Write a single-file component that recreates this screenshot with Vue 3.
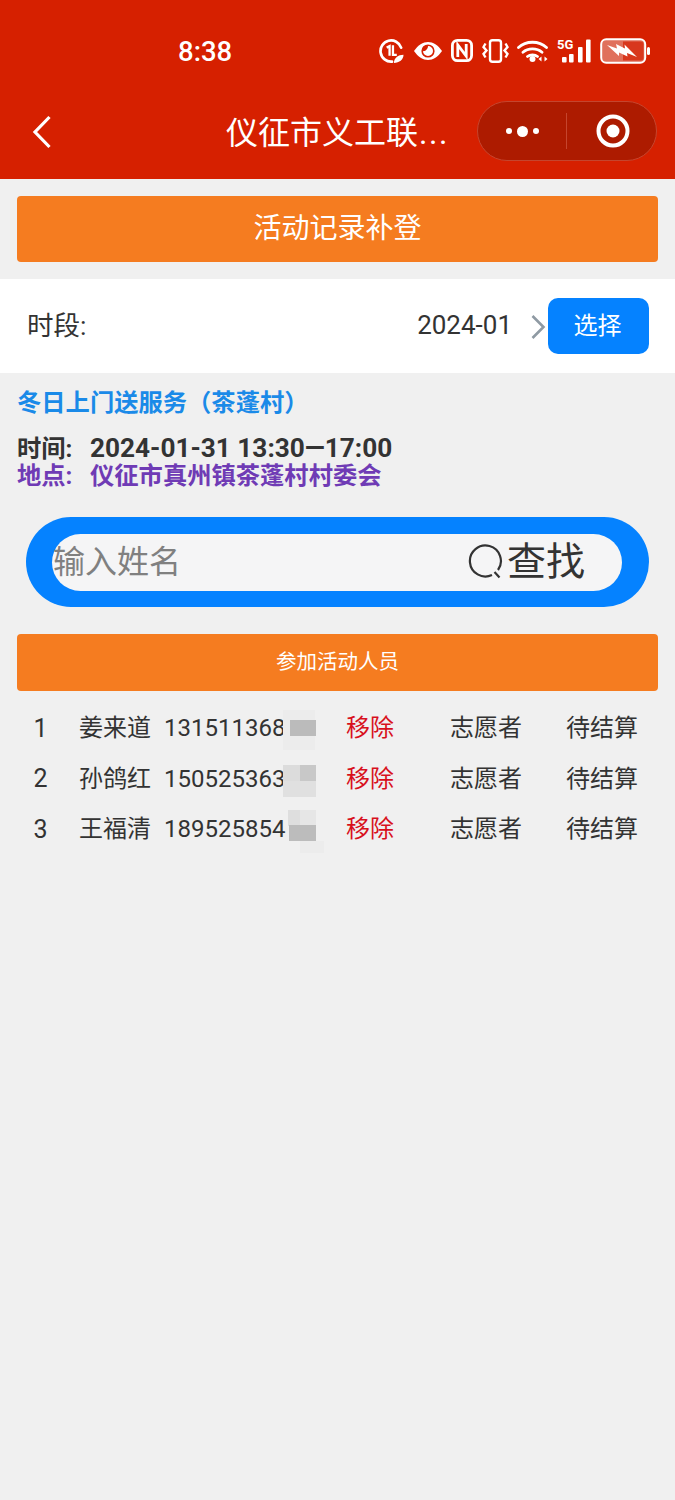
<template>
  <div class="page">
    <header class="topbar">
      <div class="statusbar">
        <span class="clock">8:38</span>
        <div class="status-icons">
          <svg class="ic" width="25" height="26" viewBox="0 0 26 26">
            <path d="M23 9.500A11 11 0 1 0 13.500 24" fill="none" stroke="#fff" stroke-width="2.800" stroke-linecap="round"/>
            <path d="M8 9.500l3-1.600V18M14.500 7V17h4" fill="none" stroke="#fff" stroke-width="2.400"/>
            <path d="M15.500 25.500c0-5 4.500-8.500 10-8.500 0 5-4.500 8.500-10 8.500z" fill="#fff"/>
          </svg>
          <svg class="ic" width="30" height="20" viewBox="0 0 30 20">
            <path d="M1 10C5 4 10 1 15 1s10 3 14 9c-4 6-9 9-14 9S5 16 1 10z" fill="#fff"/>
            <circle cx="15" cy="10" r="6.600" fill="#d62000"/>
            <path d="M15 5a5 5 0 1 1-5 5c2 .8 5-1.800 5-5z" fill="#fff"/>
          </svg>
          <svg class="ic" width="22" height="23" viewBox="0 0 22 23">
            <rect x="1.400" y="1.400" width="19.200" height="20.200" rx="5" fill="none" stroke="#fff" stroke-width="2.800"/>
            <path d="M6.800 18V6l8.400 11V5" fill="none" stroke="#fff" stroke-width="2.800"/>
          </svg>
          <svg class="ic" width="27" height="24" viewBox="0 0 27 24">
            <rect x="8" y="1.200" width="11" height="21.600" rx="2.500" fill="none" stroke="#fff" stroke-width="2.400"/>
            <path d="M3.500 4.500L1.500 8l3 3.500-3 3.500 2 3.500M23.500 4.500l2 3.500-3 3.500 3 3.500-2 3.500" fill="none" stroke="#fff" stroke-width="2.400"/>
          </svg>
          <svg class="ic" width="31" height="22" viewBox="0 0 31 22">
            <path d="M1.500 7.500C9 .5 22 .5 29.500 7.500M6 12.200c5-4.500 14-4.500 19 0M10.500 16.500c2.500-2 7.500-2 10 0" fill="none" stroke="#fff" stroke-width="2.800" stroke-linecap="round"/>
            <circle cx="15.500" cy="19" r="3" fill="#fff"/>
            <path d="M21.500 19l3-2.500v5zM30.500 19l-3-2.500v5z" fill="#fff"/>
          </svg>
          <svg class="ic" width="35" height="25" viewBox="0 0 35 25">
            <text x="0" y="11" class="five-g">5G</text>
            <rect x="5" y="19" width="4.600" height="5.500" rx="1" fill="#fff"/>
            <rect x="12" y="16" width="4.600" height="8.500" rx="1" fill="#fff"/>
            <rect x="21" y="9" width="4.600" height="15.500" rx="1" fill="#fff"/>
            <rect x="29" y="1.500" width="4.600" height="23" rx="1" fill="#fff"/>
          </svg>
          <svg class="ic" width="50" height="26" viewBox="0 0 50 26">
            <rect x="1.200" y="1.200" width="44" height="23.600" rx="5" fill="#e0705c" stroke="#fff" stroke-width="2"/>
            <path d="M23 3.500h17.500a3 3 0 0 1 3 3v13a3 3 0 0 1-3 3H23z" fill="#d8371d"/>
            <path d="M7 7l10 3.500L16 6l9 4.500-.5-4L37 19l-10-4 .5 3.500L19 14.500V18z" fill="#fff"/>
            <rect x="47" y="9" width="3" height="8" rx="1.500" fill="#fff"/>
          </svg>
        </div>
      </div>
      <nav class="navbar">
        <svg class="back" width="20" height="34" viewBox="0 0 20 34">
          <path d="M17.500 2L3 17l14.500 15" fill="none" stroke="#fff" stroke-width="3.200"/>
        </svg>
        <div class="title">仪征市义工联<span class="ellipsis">...</span></div>
        <div class="capsule">
          <div class="dots"><i class="dot"></i><i class="dot big"></i><i class="dot"></i></div>
          <div class="divider"></div>
          <svg width="36" height="36" viewBox="0 0 36 36">
            <circle cx="18" cy="18" r="14.500" fill="none" stroke="#fff" stroke-width="4"/>
            <circle cx="18" cy="18" r="6.500" fill="#fff"/>
          </svg>
        </div>
      </nav>
    </header>

    <div class="bar bar-top">活动记录补登</div>

    <div class="period">
      <span class="period-label">时段:</span>
      <span class="period-value">2024-01</span>
      <svg class="chevron" width="16" height="26" viewBox="0 0 16 26">
        <path d="M2.500 2l11 11-11 11" fill="none" stroke="#8f9aa3" stroke-width="2.600"/>
      </svg>
      <button class="pick">选择</button>
    </div>

    <div class="info">
      <div class="info-title">冬日上门送服务（茶蓬村）</div>
      <div class="info-time"><span class="info-key">时间:</span><span class="info-num">2024-01-31 13:30—17:00</span></div>
      <div class="info-place"><span class="info-key">地点:</span>仪征市真州镇茶蓬村村委会</div>
    </div>

    <div class="search">
      <div class="search-inner">
        <span class="placeholder">输入姓名</span>
        <svg class="search-icon" width="36" height="36" viewBox="0 0 36 36">
          <path d="M24 31A15.500 15.500 0 1 1 30 26" fill="none" stroke="#333" stroke-width="2.200"/>
          <path d="M26.500 28l5 5.500" stroke="#333" stroke-width="2.200" fill="none"/>
        </svg>
        <span class="search-text">查找</span>
      </div>
    </div>

    <div class="bar bar-people">参加活动人员</div>

    <div class="people">
      <div v-for="p in people" :key="p.no" class="person">
        <span class="no">{{ p.no }}</span>
        <span class="cn">{{ p.name }}</span>
        <span class="phone">{{ p.phone }}</span>
        <span class="cn remove">移除</span>
        <span class="cn">志愿者</span>
        <span class="cn">待结算</span>
      </div>
      <div class="mosaic">
        <i class="m m-fade1"></i>
        <i class="m m-dark1"></i>
        <i class="m m-a"></i>
        <i class="m m-b"></i>
        <i class="m m-c"></i>
        <i class="m m-d"></i>
        <i class="m m-e"></i>
        <i class="m m-dark2"></i>
        <i class="m m-fade2"></i>
      </div>
    </div>
  </div>
</template>

<script setup>
const people = [
  { no: 1, name: '姜来道', phone: '131511368' },
  { no: 2, name: '孙鸽红', phone: '150525363' },
  { no: 3, name: '王福清', phone: '189525854' }
]
</script>

<style>
body {
  background: #f0f0f0;
}
</style>

<style scoped>
.page {
  width: 675px;
  min-height: 1500px;
  background: #f0f0f0;
  font-family: Roboto, "Noto Sans CJK SC", sans-serif;
  color: #333;
  overflow: hidden;
}

.topbar {
  height: 179px;
  background: #d62000;
  color: #fff;
}

.statusbar {
  height: 101px;
  display: flex;
  align-items: center;
  padding: 0 25px 0 178px;
  box-sizing: border-box;
}

.clock {
  font-size: 27.500px;
  font-weight: 500;
  line-height: 1;
  padding-top: 2px;
}

.status-icons {
  margin-left: auto;
  display: flex;
  align-items: center;
  gap: 8.500px;
}

.ic {
  display: block;
  flex: none;
}

.five-g {
  font-family: Roboto, sans-serif;
  font-size: 13px;
  font-weight: 700;
  fill: #fff;
}

.navbar {
  height: 60px;
  display: flex;
  align-items: center;
  padding: 0 18px 0 32px;
}

.back {
  flex: none;
  margin-top: 2px;
}

.title {
  margin: 3px 0 0 174px;
  font-size: 32px;
  white-space: nowrap;
  line-height: 60px;
}

.ellipsis {
  letter-spacing: 1.500px;
  margin-left: 1px;
}

.capsule {
  margin-left: auto;
  width: 180px;
  height: 60px;
  box-sizing: border-box;
  border: 1px solid #c5452e;
  border-radius: 30px;
  background: #ad1b00;
  display: flex;
  align-items: center;
  padding-left: 26px;
}

.dots {
  display: flex;
  align-items: center;
  gap: 5px;
  width: 36px;
  justify-content: center;
}

.dot {
  flex: none;
  width: 6px;
  height: 6px;
  border-radius: 50%;
  background: #fff;
}

.dot.big {
  width: 11px;
  height: 11px;
}

.divider {
  width: 1px;
  height: 36px;
  margin: 0 28px 0 26px;
  background: #c5452e;
}

.bar {
  margin: 0 17px;
  background: #f57c20;
  border-radius: 4px;
  color: #fff;
  display: flex;
  align-items: center;
  justify-content: center;
  box-sizing: border-box;
  padding-bottom: 6px;
}

.bar-top {
  margin-top: 17px;
  height: 66px;
  font-size: 28px;
}

.period {
  margin-top: 17px;
  height: 94px;
  background: #fff;
  display: flex;
  align-items: center;
  padding: 0 26px 0 27px;
}

.period-label {
  font-size: 26.500px;
  padding-bottom: 6px;
}

.period-value {
  margin-left: auto;
  font-size: 26px;
  padding-bottom: 2px;
}

.chevron {
  margin: 1px 2px 0 18px;
}

.pick {
  width: 101px;
  height: 56px;
  border: 0;
  padding: 0 2px 6px 0;
  border-radius: 10px;
  background: #0582ff;
  color: #fff;
  font-family: inherit;
  font-size: 24px;
}

.info {
  padding: 13px 17px 0;
  font-size: 24.300px;
  font-weight: 700;
}

.info-title {
  line-height: 34px;
  color: #1a8ae8;
}

.info-time {
  margin-top: 14px;
  line-height: 28px;
  height: 28px;
  color: #333;
}

.info-num {
  font-size: 26.200px;
}

.info-place {
  line-height: 28px;
  color: #6f3bb5;
}

.info-key {
  display: inline-block;
  width: 73px;
}

.search {
  margin: 27px 26px 0;
  height: 90px;
  border-radius: 45px;
  background: #0582ff;
  padding: 17px 27px 16px 26px;
  box-sizing: border-box;
}

.search-inner {
  height: 57px;
  border-radius: 29px;
  background: #f5f5f6;
  display: flex;
  align-items: center;
  padding-left: 1px;
}

.placeholder {
  font-size: 32px;
  color: #808080;
  padding-bottom: 8px;
}

.search-icon {
  margin-left: auto;
  margin-top: -2px;
}

.search-text {
  margin: 0 37px 0 3px;
  font-size: 39px;
  line-height: 57px;
}

.bar-people {
  margin-top: 27px;
  height: 57px;
  font-size: 20.500px;
}

.people {
  position: relative;
  margin-top: 12px;
}

.person {
  display: grid;
  grid-template-columns: 79px 85px 182px 104px 116px 1fr;
  align-items: center;
  height: 50.500px;
  font-size: 24px;
  white-space: nowrap;
}

.no {
  font-size: 25px;
  text-align: center;
  padding-left: 2px;
}

.cn {
  padding-bottom: 5px;
}

.remove {
  color: #d8101c;
}

/* 手机号打码 */
.mosaic {
  position: absolute;
  left: 283px;
  top: 0;
  width: 33px;
  height: 155px;
}

.m {
  position: absolute;
  display: block;
}

.m-fade1 { left: 0; top: 7px; width: 32px; height: 40px; background: #ececec; }
.m-dark1 { left: 7px; top: 17px; width: 26px; height: 16px; background: #bbb; }
.m-a { left: 0; top: 62px; width: 17px; height: 16px; background: #dcdcdc; }
.m-b { left: 17px; top: 62px; width: 16px; height: 16px; background: #c8c8c8; }
.m-c { left: 0; top: 78px; width: 33px; height: 16px; background: #e0e0e0; }
.m-d { left: 5px; top: 107px; width: 12px; height: 16px; background: #dedede; }
.m-e { left: 17px; top: 107px; width: 16px; height: 16px; background: #e6e6e6; }
.m-dark2 { left: 6px; top: 122px; width: 27px; height: 16px; background: #bcbcbc; }
.m-fade2 { left: 17px; top: 138px; width: 24px; height: 12px; background: #ececec; }
</style>
